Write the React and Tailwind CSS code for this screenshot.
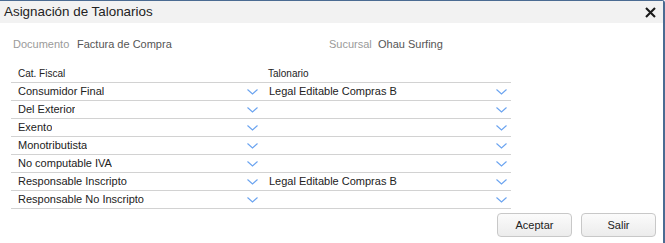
import React from "react";

const rows = [
  { cat: "Consumidor Final", tal: "Legal Editable Compras B" },
  { cat: "Del Exterior", tal: "" },
  { cat: "Exento", tal: "" },
  { cat: "Monotributista", tal: "" },
  { cat: "No computable IVA", tal: "" },
  { cat: "Responsable Inscripto", tal: "Legal Editable Compras B" },
  { cat: "Responsable No Inscripto", tal: "" },
];

const Chevron = () => (
  <svg width="11" height="6" viewBox="0 0 11 6" fill="none" className="shrink-0">
    <path d="M0.5 0.5L5.5 5L10.5 0.5" stroke="#6aa3f0" strokeWidth="1.1" />
  </svg>
);

const SelectCell = ({ value, className = "" }) => (
  <div className={`flex items-center justify-between h-[17px] pl-[7px] pr-[4px] ${className}`}>
    <span className="truncate">{value}</span>
    <Chevron />
  </div>
);

export default function App() {
  return (
    <div className="w-[665px] h-[243px] bg-white overflow-hidden" style={{ fontFamily: "'Liberation Sans', Arial, sans-serif" }}>
      <div className="w-full h-full flex flex-col border-t border-r-2 border-[#4b6b92] rounded-tr-[3px] bg-white">
        {/* Header */}
        <div className="h-[22px] bg-[#f2f2f2] flex items-center justify-between pl-[4px] pr-[7px] shrink-0">
          <h1 className="text-[13.4px] text-[#222]">Asignación de Talonarios</h1>
          <svg width="11" height="11" viewBox="0 0 11 11" className="mt-[1px]">
            <path d="M1 1L10 10M10 1L1 10" stroke="#1a1a1a" strokeWidth="2.1" />
          </svg>
        </div>

        {/* Documento / Sucursal */}
        <div className="flex items-center h-[22px] mt-[10px] pl-[13px] text-[11px]">
          <div className="flex items-baseline w-[316px]">
            <span className="w-[64px] text-[#9a9a9a]">Documento</span>
            <span className="text-[#555]">Factura de Compra</span>
          </div>
          <div className="flex items-baseline">
            <span className="w-[49px] text-[#9a9a9a]">Sucursal</span>
            <span className="text-[#555]">Ohau Surfing</span>
          </div>
        </div>

        {/* Table */}
        <div className="ml-[11px] w-[500px] mt-[11px]">
          <div className="grid grid-cols-[251px_249px] h-[17px] items-end pb-[3px] border-b border-[#d2d2d2] text-[10px] text-[#222]">
            <span className="pl-[7px]">Cat. Fiscal</span>
            <span className="pl-[6px]">Talonario</span>
          </div>
          {rows.map((r) => (
            <div key={r.cat} className="grid grid-cols-[251px_249px] border-b border-[#d2d2d2] text-[11px] text-[#222]">
              <SelectCell value={r.cat} />
              <SelectCell value={r.tal} className="pl-[6px]" />
            </div>
          ))}
        </div>

        {/* Buttons */}
        <div className="flex justify-end gap-[9px] pr-[7px] mt-[4px]">
          <button className="w-[75px] h-[24px] rounded-[4px] border border-[#c8c8c8] bg-gradient-to-b from-[#fbfbfb] to-[#ececec] text-[11px] text-[#222]">
            Aceptar
          </button>
          <button className="w-[75px] h-[24px] rounded-[4px] border border-[#c8c8c8] bg-gradient-to-b from-[#fbfbfb] to-[#ececec] text-[11px] text-[#222]">
            Salir
          </button>
        </div>
      </div>
    </div>
  );
}
